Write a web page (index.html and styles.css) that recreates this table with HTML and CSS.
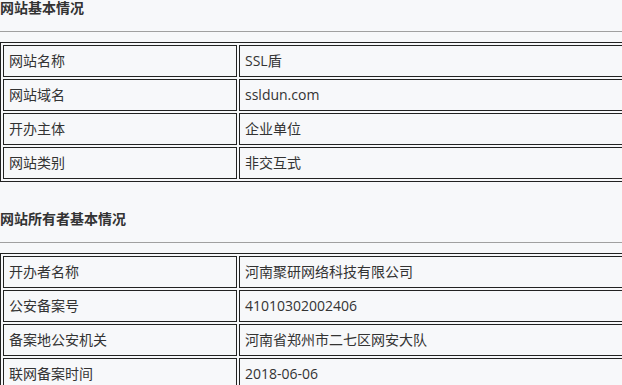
FILE: index.html
```html
<!DOCTYPE html>
<html lang="zh-CN">
<head>
<meta charset="utf-8">
<title>网站备案信息</title>
<link rel="stylesheet" href="styles.css">
</head>
<body>
<div class="page">
  <h3 class="title first">网站基本情况</h3>
  <hr class="rule">
  <table class="info">
    <tr><td class="k">网站名称</td><td class="v">SSL盾</td></tr>
    <tr><td class="k">网站域名</td><td class="v">ssldun.com</td></tr>
    <tr><td class="k">开办主体</td><td class="v">企业单位</td></tr>
    <tr><td class="k">网站类别</td><td class="v">非交互式</td></tr>
  </table>
  <h3 class="title">网站所有者基本情况</h3>
  <hr class="rule">
  <table class="info">
    <tr><td class="k">开办者名称</td><td class="v">河南聚研网络科技有限公司</td></tr>
    <tr><td class="k">公安备案号</td><td class="v">41010302002406</td></tr>
    <tr><td class="k">备案地公安机关</td><td class="v">河南省郑州市二七区网安大队</td></tr>
    <tr><td class="k">联网备案时间</td><td class="v">2018-06-06</td></tr>
  </table>
</div>
</body>
</html>
```
FILE: styles.css
```css
html, body {
  margin: 0;
  padding: 0;
  background: #f7f8fa;
  overflow: hidden;
}
.page {
  width: 760px;
  font-family: "Open Sans", "Noto Sans CJK SC", sans-serif;
  font-size: 14px;
  color: #333;
}
.title {
  margin: 29px 0 0 0;
  font-family: "Noto Sans CJK SC", sans-serif;
  font-size: 14px;
  font-weight: bold;
  line-height: 14px;
  color: #333;
}
.title.first {
  margin-top: 0;
}
.rule {
  margin: 17px 0 10px 0;
  border: 0;
  border-top: 1px solid #a0a0a0;
  height: 0;
}
.info {
  width: 100%;
  border: 1px solid #222;
  border-spacing: 2px;
}
.info td {
  border: 1px solid #222;
  padding: 0 5px;
  box-sizing: border-box;
  height: 32px;
  line-height: 20px;
  font-family: "Open Sans", "Noto Sans CJK SC", sans-serif;
}
.info .k {
  width: 234px;
}
```
